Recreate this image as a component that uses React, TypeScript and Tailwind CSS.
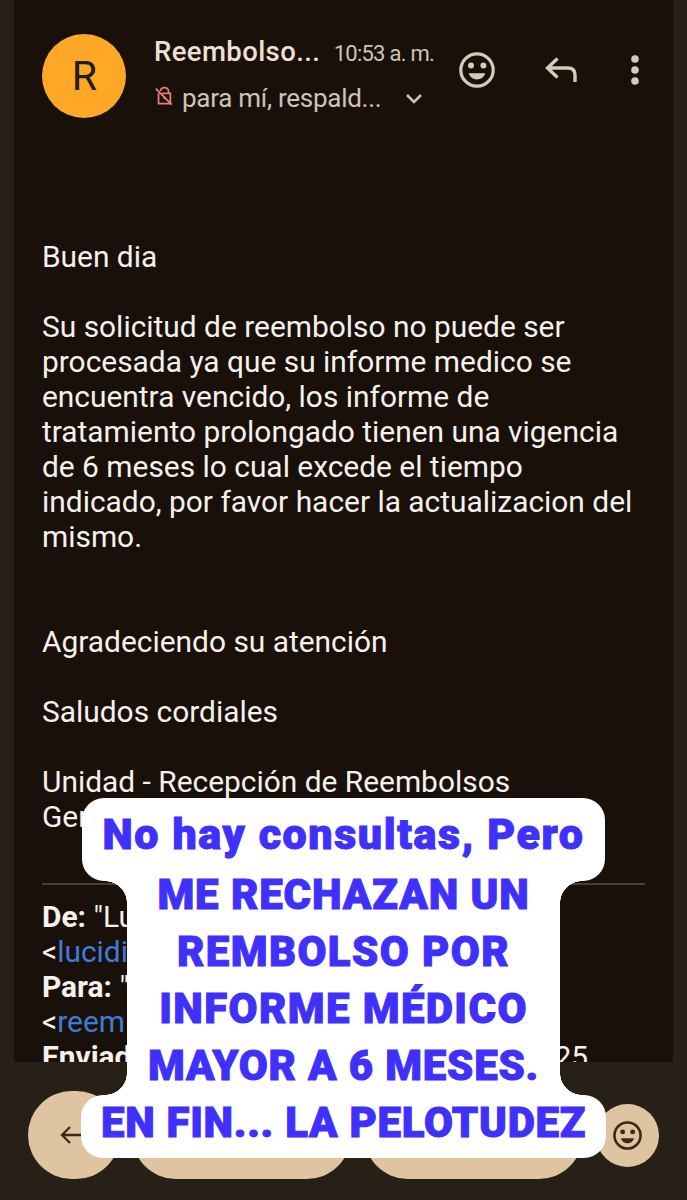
import type { ReactNode } from "react";

function Smile({ className }: { className: string }) {
  return (
    <svg viewBox="0 0 36 36" className={className} fill="none" stroke="currentColor">
      <circle cx="18" cy="18" r="16.2" strokeWidth="3.2" />
      <circle cx="12" cy="13.6" r="3" fill="currentColor" stroke="none" />
      <circle cx="24.4" cy="13.6" r="3" fill="currentColor" stroke="none" />
      <path d="M9.7 21.3h16.6c-1.3 3.9-4.3 6.2-8.3 6.2s-7-2.3-8.3-6.2Z" fill="currentColor" stroke="none" />
    </svg>
  );
}

function Header() {
  return (
    <header className="flex h-[239px] items-start pl-7 pt-[34px]">
      <div className="flex size-[84px] shrink-0 items-center justify-center rounded-full bg-[#ffa726] pl-px text-[41px] leading-none text-[#211d18]">
        R
      </div>
      <div className="ml-7 w-[280px] shrink-0 whitespace-nowrap">
        <div className="flex h-9 items-baseline justify-between">
          <span className="text-[27.5px] font-medium leading-9 tracking-[0.4px] text-[#efe0d2]">Reembolso...</span>
          <span className="text-[22px] leading-9 tracking-[-0.75px] text-[#cfc3b7]">10:53 a. m.</span>
        </div>
        <div className="mt-[10px] flex h-9 items-center">
          <svg viewBox="0 0 20 22" className="-mt-1 size-[20px] shrink-0 text-[#e5827a]" fill="none" stroke="currentColor" strokeWidth="1.9">
            <path d="M4 8v11.5h13V8H8M6 5.5C6.5 3 8 1.8 10.5 1.8S15 3.6 15 6v2M1 3l17.5 17.5" />
            <path d="M10.5 11.5v3" />
          </svg>
          <span className="ml-[8px] text-[26px] leading-9 tracking-[-0.27px] text-[#cfc3b7]">para mí, respald...</span>
          <svg viewBox="0 0 16 10" className="ml-auto mr-[12px] mt-0.5 h-[10px] w-4 text-[#cfc3b7]" fill="none" stroke="currentColor" strokeWidth="2.5">
            <path d="m1 1 7 7 7-7" />
          </svg>
        </div>
      </div>
      <div className="flex h-[71px] items-center text-[#d8c9b9]">
        <Smile className="ml-[25px] size-9" />
        <svg viewBox="0 0 32 26" className="ml-[50px] h-[26px] w-8" fill="none" stroke="currentColor" strokeWidth="3.4">
          <path d="M12.5 1.5 2.5 11l10 9.5M2.5 11H23q7 0 7 7v7" />
        </svg>
        <svg viewBox="0 0 8 30" className="ml-[54px] h-[30px] w-2" fill="currentColor">
          <circle cx="4" cy="4" r="3.8" />
          <circle cx="4" cy="15" r="3.8" />
          <circle cx="4" cy="26" r="3.8" />
        </svg>
      </div>
    </header>
  );
}

const body: string[] = [
  "Buen dia",
  "",
  "Su solicitud de reembolso no puede ser",
  "procesada ya que su informe medico se",
  "encuentra vencido, los informe de",
  "tratamiento prolongado tienen una vigencia",
  "de 6 meses lo cual excede el tiempo",
  "indicado, por favor hacer la actualizacion del",
  "mismo.",
  "",
  "",
  "Agradeciendo su atención",
  "",
  "Saludos cordiales",
  "",
  "Unidad - Recepción de Reembolsos",
  "Ger",
];

function Quoted() {
  return (
    <div className="mx-7 mt-[49px] whitespace-nowrap border-t-2 border-[#46403a] pt-[14px] text-[29.9px] leading-[35px]">
      <p><b>De:</b> "Lu</p>
      <p>&lt;<span className="text-[#3f7bd6]">lucidi</span></p>
      <p><b>Para:</b> "</p>
      <p>&lt;<span className="text-[#3f7bd6]">reem</span></p>
      <p className="flex w-[546px] justify-between"><b>Enviad</b><span>25</span></p>
    </div>
  );
}

function ActionBar() {
  return (
    <footer className="flex h-[138px] items-center pl-7 pt-[8px] text-[#3b2913]">
      <div className="flex h-[88px] w-[92px] items-center rounded-full bg-[#dfc4a2] pl-8">
        <svg viewBox="0 0 24 18" className="h-[18px] w-6" fill="none" stroke="currentColor" strokeWidth="2.3">
          <path d="M10 1 2 9l8 8M2 9h22" />
        </svg>
      </div>
      <div className="ml-[12px] h-[88px] w-[219px] rounded-full bg-[#dfc4a2]" />
      <div className="ml-[13px] h-[88px] w-[219px] rounded-full bg-[#dfc4a2]" />
      <div className="ml-[13px] flex size-[63px] items-center justify-center rounded-full bg-[#dfc4a2]">
        <Smile className="size-[29px]" />
      </div>
    </footer>
  );
}

function Line({ className, children }: { className: string; children: ReactNode }) {
  return <p className={`h-[57px] text-center leading-[57px] ${className}`}>{children}</p>;
}

function Caption() {
  return (
    <div className="absolute left-[81px] top-[798px] flex w-[525px] flex-col items-center whitespace-nowrap font-['Roboto',sans-serif] font-black text-[#4030fb] [-webkit-text-stroke:1px_#4030fb]">
      <div className="h-[83px] w-[523px] rounded-[22px] bg-white pt-[8px]">
        <Line className="text-[43px] tracking-[1.6px]">No hay consultas, Pero</Line>
      </div>
      <div className="relative h-[214px] w-[433px] bg-white">
        <i className="absolute -left-[22px] top-0 size-[22px] bg-[radial-gradient(circle_at_0%_100%,transparent_21.5px,white_22px)]" />
        <i className="absolute -right-[22px] top-0 size-[22px] bg-[radial-gradient(circle_at_100%_100%,transparent_21.5px,white_22px)]" />
        <i className="absolute -left-[22px] bottom-0 size-[22px] bg-[radial-gradient(circle_at_0%_0%,transparent_21.5px,white_22px)]" />
        <i className="absolute -right-[22px] bottom-0 size-[22px] bg-[radial-gradient(circle_at_100%_0%,transparent_21.5px,white_22px)]" />
        <div className="-mt-[15px]">
          <Line className="text-[42px] tracking-[0.9px]">ME RECHAZAN UN</Line>
          <Line className="text-[42px] tracking-[1.4px]">REMBOLSO POR</Line>
          <Line className="text-[42px] tracking-[1.4px]">INFORME MÉDICO</Line>
          <Line className="text-[42px] tracking-[0.8px]">MAYOR A 6 MESES.</Line>
        </div>
      </div>
      <div className="h-[63px] w-[525px] rounded-[22px] bg-white">
        <Line className="-mt-px text-[42px] tracking-[0.7px]">EN FIN... LA PELOTUDEZ</Line>
      </div>
    </div>
  );
}

export default function App() {
  return (
    <div className="relative h-[1200px] w-[687px] overflow-hidden bg-[#272017] font-['Roboto',sans-serif]">
      <main className="mx-[14px] h-[1062px] overflow-hidden bg-[#191109] text-[#f5f1ec]">
        <Header />
        <div className="whitespace-nowrap pl-7 text-[29.9px] leading-[35px]">
          {body.map((text, i) => (
            <p key={i} className="h-[35px]">{text}</p>
          ))}
        </div>
        <Quoted />
      </main>
      <ActionBar />
      <Caption />
    </div>
  );
}
